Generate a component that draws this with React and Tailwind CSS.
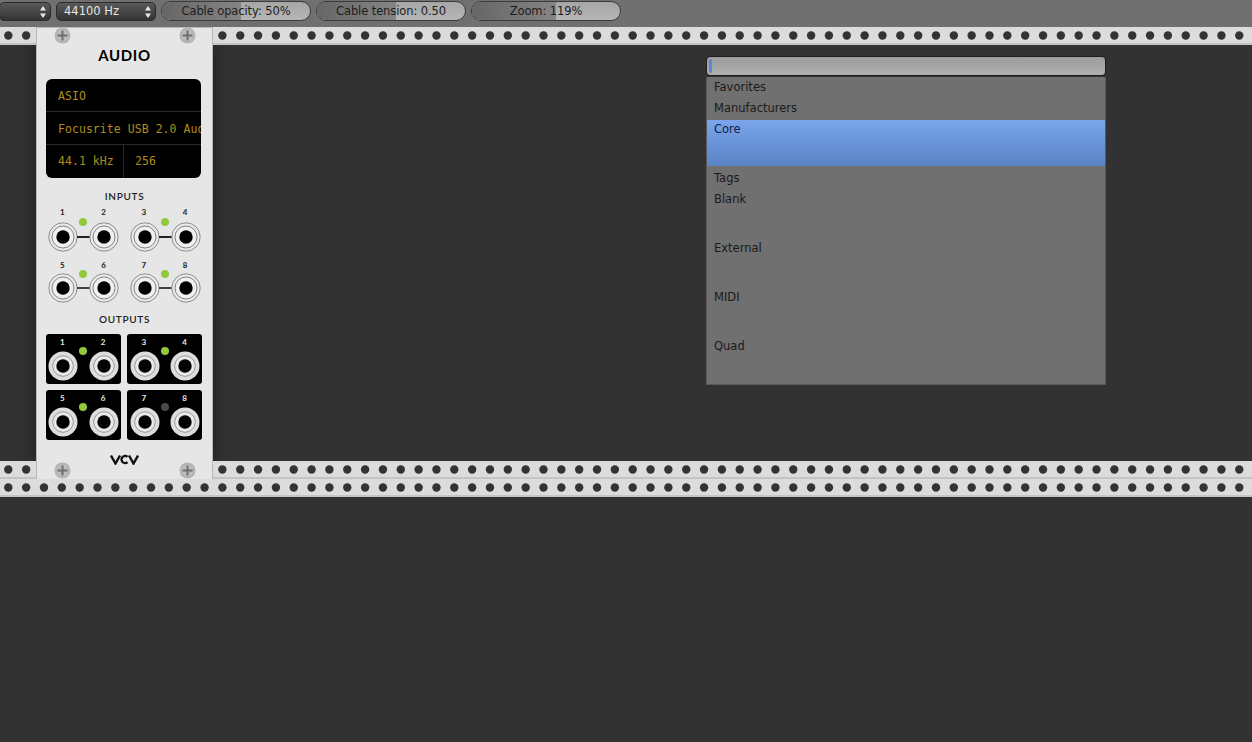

const holes = Array.from({ length: 71 }, (_, i) => 8.3 + i * 17.84);

function Rail() {
  return (
    <div className="h-[18px] bg-[#dcdcdc] border-b-2 border-[#c4c4c4] shrink-0">
      <svg width="1252" height="16" className="block">
        {holes.map((x) => (
          <circle key={x} cx={x} cy="8.5" r="4.2" fill="#333333" />
        ))}
      </svg>
    </div>
  );
}

function Select({ children, className }) {
  return (
    <div className={"h-[19px] rounded-[5px] border border-[#2a2a2a] bg-gradient-to-b from-[#5a5a5a] to-[#333333] text-[#e6e6e6] flex items-center justify-between pl-[7px] pr-[3px] " + className}>
      <span className="pt-px">{children}</span>
      <svg width="8" height="14" viewBox="0 0 8 14">
        <path d="M4 1 L7 5.5 H1 Z M4 13 L1 8.5 H7 Z" fill="#e8e8e8" />
      </svg>
    </div>
  );
}

function Slider({ label, fill }) {
  return (
    <div className="relative w-[150px] h-[20px] rounded-full border border-[#3a3a3a] overflow-hidden bg-gradient-to-b from-[#a6a6a6] to-[#b6b6b6] text-[#1c1c1c] flex items-center justify-center shrink-0">
      <div className="absolute left-0 top-0 bottom-0 bg-gradient-to-r from-[#666666] to-[#858585]" style={{ width: fill }} />
      <span className="relative pt-px tracking-[-0.1px]">{label}</span>
    </div>
  );
}

function Screw() {
  return (
    <svg width="17" height="17" viewBox="0 0 17 17" className="block">
      <circle cx="8.5" cy="8.5" r="8" fill="#b4b4b4" />
      <circle cx="8.5" cy="8.5" r="6" fill="#bcbcbc" />
      <path d="M8.5 3.5 V13.5 M3.5 8.5 H13.5" stroke="#6f6f6f" strokeWidth="2" />
    </svg>
  );
}

function InJack() {
  return (
    <svg width="30" height="30" viewBox="0 0 30 30" className="block shrink-0">
      <circle cx="15" cy="15" r="14.2" fill="#e8e8e8" stroke="#858585" strokeWidth="0.9" />
      <circle cx="15" cy="15" r="11" fill="#f0f0f0" stroke="#777777" strokeWidth="0.9" />
      <circle cx="15" cy="15" r="6.7" fill="#000000" />
    </svg>
  );
}

function OutJack() {
  return (
    <svg width="30" height="30" viewBox="0 0 30 30" className="block shrink-0">
      <circle cx="15" cy="15" r="14.5" fill="#dedede" />
      <circle cx="15" cy="15" r="10.3" fill="#e8e8e8" stroke="#888888" strokeWidth="0.8" />
      <circle cx="15" cy="15" r="6.7" fill="#000000" />
    </svg>
  );
}

function InPair({ a, b, second }) {
  return (
    <div className="relative">
      <div className="flex justify-between pl-[12px] pr-[13px] text-[8px] leading-[10px] font-bold text-[#222222]">
        <span>{a}</span>
        <span>{b}</span>
      </div>
      <div className={"flex items-center " + (second ? "mt-[3px]" : "mt-[5px]")}>
        <InJack />
        <div className={"flex-1 -mx-px " + (second ? "h-[2px] bg-[#444444]" : "h-[1.5px] bg-[#222222]")} />
        <InJack />
      </div>
      <span className={"absolute left-[31px] w-2 h-2 rounded-full bg-[#92c83e] " + (second ? "top-[10px]" : "top-[11px]")} />
    </div>
  );
}

function OutPair({ a, b, off }) {
  return (
    <div className="relative h-[50px] rounded-[3px] bg-black pl-[2.5px] pr-[2px] pt-[3px]">
      <div className="flex justify-between pl-[12px] pr-[13px] text-[8px] leading-[10px] font-bold text-[#e8e8e8]">
        <span>{a}</span>
        <span>{b}</span>
      </div>
      <div className="flex justify-between mt-[4px]">
        <OutJack />
        <OutJack />
      </div>
      <span className={"absolute left-[33.5px] top-[13px] w-2 h-2 rounded-full " + (off ? "bg-[#4a4a4a]" : "bg-[#92c83e]")} />
    </div>
  );
}

function Module() {
  return (
    <div className="absolute left-[36px] top-[27px] w-[177px] h-[452px] bg-[#e6e6e6] border-x border-t border-[#b8b8b8] flex flex-col font-['Lato',sans-serif]">
      <div className="flex justify-between px-[16.5px] -mt-px shrink-0">
        <Screw />
        <Screw />
      </div>
      <div className="text-center text-[15px] leading-[18px] font-bold text-black mt-[2px] tracking-[0.6px] shrink-0">AUDIO</div>
      <div className="ml-[9px] mt-[15px] w-[155px] h-[99px] shrink-0 rounded-[6px] bg-black overflow-hidden font-['DejaVu_Sans_Mono',monospace] text-[11.5px] text-[#ad8e18] tracking-[0.05px]">
        <div className="h-[33px] px-[12px] pt-[3px] flex items-center border-b border-[#2a2a2a]">ASIO</div>
        <div className="h-[33px] pl-[12px] pt-[3px] flex items-center border-b border-[#2a2a2a] whitespace-nowrap">Focusrite USB 2.0 Audio</div>
        <div className="h-[33px] flex">
          <div className="w-[78px] pl-[12px] flex items-center border-r border-[#2a2a2a]">44.1 kHz</div>
          <div className="pl-[11px] flex items-center">256</div>
        </div>
      </div>
      <div className="text-center text-[10px] leading-[12px] font-semibold text-[#222222] tracking-[0.7px] mt-[12px] shrink-0">INPUTS</div>
      <div className="grid grid-cols-[71px_71px] gap-x-[10.5px] gap-y-[8px] pl-[11px] mt-[5px] shrink-0">
        <InPair a="1" b="2" />
        <InPair a="3" b="4" />
        <InPair a="5" b="6" second />
        <InPair a="7" b="8" second />
      </div>
      <div className="text-center text-[10px] leading-[12px] font-semibold text-[#222222] tracking-[0.7px] mt-[10px] shrink-0">OUTPUTS</div>
      <div className="grid grid-cols-[75px_75px] gap-x-[6.5px] gap-y-[6px] pl-[8.5px] mt-[9px] shrink-0">
        <OutPair a="1" b="2" />
        <OutPair a="3" b="4" />
        <OutPair a="5" b="6" />
        <OutPair a="7" b="8" off />
      </div>
      <div className="flex justify-center mt-[14px] shrink-0">
        <svg width="29" height="11" viewBox="0 0 29 11" fill="none" stroke="#111111" strokeWidth="2.4">
          <path d="M1 1.5 L5.5 9.5 L10 1.5" />
          <path d="M17.5 2.8 A3.6 3.6 0 1 0 17.5 8.2" />
          <path d="M19 1.5 L23.5 9.5 L28 1.5" />
        </svg>
      </div>
      <div className="flex justify-between px-[16.5px] -mt-[3.5px] shrink-0">
        <Screw />
        <Screw />
      </div>
    </div>
  );
}

function Browser() {
  const Row = ({ children, tall, top }) => (
    <div className={"px-[7px] leading-[15px] " + (tall ? "h-[49px] " : "h-[21px] ") + (top ? "pt-[2px]" : "pt-[3px]")}>{children}</div>
  );
  return (
    <div className="absolute left-[706px] top-[56px] w-[400px] font-['DejaVu_Sans',sans-serif] text-[11.5px] text-[#1a1a1a]">
      <div className="h-[20px] rounded-[4px] border border-[#1e1e1e] bg-gradient-to-b from-[#9c9c9c] to-[#b0b0b0] pl-[2px] py-[2px]">
        <div className="w-[3px] h-[14px] rounded-sm bg-[#5b87d6]" />
      </div>
      <div className="h-[308px] mt-px bg-[#707070] border-l border-r border-b border-[#595959] pt-[1px]">
        <Row top>Favorites</Row>
        <Row top>Manufacturers</Row>
        <div className="h-[46px] px-[7px] pt-[2px] leading-[15px] bg-gradient-to-b from-[#7aa5ec] to-[#5a83c6] text-[#10204a]">Core</div>
        <div className="h-[2px]" />
        <Row>Tags</Row>
        <Row tall>Blank</Row>
        <Row tall>External</Row>
        <Row tall>MIDI</Row>
        <Row>Quad</Row>
      </div>
    </div>
  );
}

export default function App() {
  return (
    <div className="relative w-[1252px] h-[742px] overflow-hidden bg-[#323232] opacity-[0.999] font-['DejaVu_Sans',sans-serif] text-[11.5px]">
      <div className="h-[27px] bg-[#707070] flex items-start gap-[5px] pt-[1px]">
        <Select className="w-[52px] -ml-px mt-px" />
        <Select className="w-[100px] mt-px">44100 Hz</Select>
        <Slider label="Cable opacity: 50%" fill={79} />
        <Slider label="Cable tension: 0.50" fill={79} />
        <Slider label="Zoom: 119%" fill={84} />
      </div>
      <Rail />
      <div className="relative h-[416px] overflow-hidden">
        <div className="absolute left-[36px] w-[177px] top-0 bottom-0 shadow-[0_0_16px_rgba(0,0,0,0.45)]" />
      </div>
      <Rail />
      <Rail />
      <Module />
      <Browser />
    </div>
  );
}
